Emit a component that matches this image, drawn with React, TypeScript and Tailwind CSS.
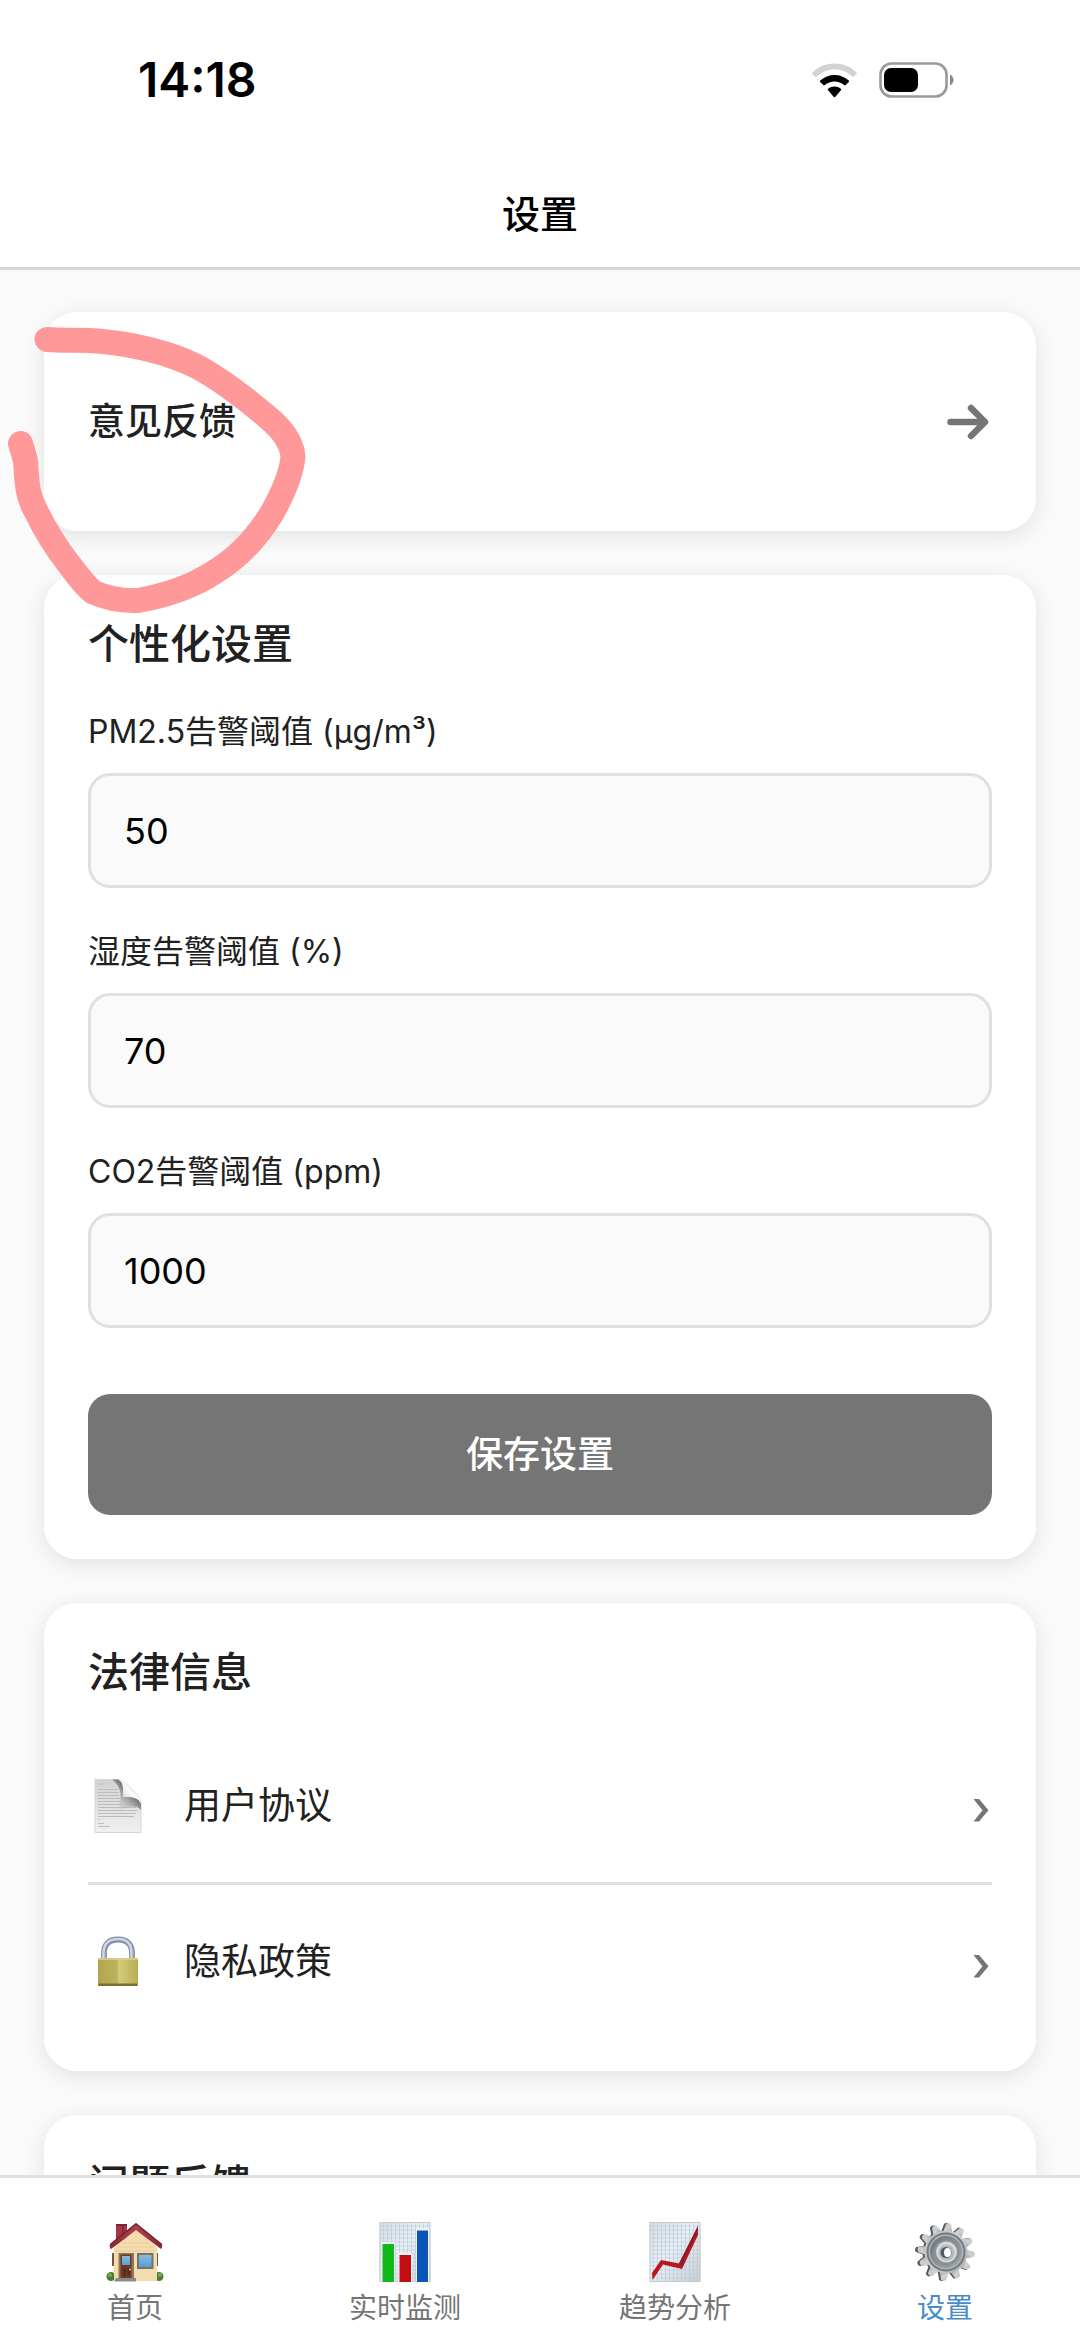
import React, { useState } from 'react';

const WifiIcon: React.FC = () => (
  <svg width="45" height="35" viewBox="0 0 45 35" aria-hidden="true">
    <path d="M0.5 9.5C6.5 3.6 14 0.5 22.5 0.5S38.5 3.6 44.5 9.5C45 10.1 45 10.6 44.5 11.1L42 13.6C41.4 14.1 40.9 14.1 40.3 13.6C35.3 8.9 29.2 6.4 22.5 6.4S9.7 8.9 4.7 13.6C4.1 14.1 3.6 14.1 3 13.6L0.5 11.1C0 10.6 0 10.1 0.5 9.5Z" fill="#d2d2d2" />
    <path d="M8.2 17.5C12.2 13.9 17.1 11.9 22.5 11.9S32.8 13.9 36.8 17.5C37.3 18 37.3 18.5 36.8 19L33.7 22.1C33.2 22.6 32.7 22.6 32.1 22.1C29.4 19.7 26.1 18.4 22.5 18.4S15.6 19.7 12.9 22.1C12.3 22.6 11.8 22.6 11.3 22.1L8.2 19C7.7 18.5 7.7 18 8.2 17.5Z" fill="#000" />
    <path d="M16.2 25.7C18 24.2 20.1 23.4 22.5 23.4S27 24.2 28.8 25.7C29.4 26.2 29.4 26.7 28.9 27.3L23.4 33.8C22.8 34.4 22.2 34.4 21.6 33.8L16.1 27.3C15.6 26.7 15.6 26.2 16.2 25.7Z" fill="#000" />
  </svg>
);

const BatteryIcon: React.FC = () => (
  <svg width="75" height="36" viewBox="0 0 75 36" aria-hidden="true">
    <rect x="1.5" y="1.5" width="66" height="33" rx="11" fill="none" stroke="#9a9a9a" strokeWidth="2.6" />
    <rect x="5" y="6" width="34" height="24" rx="7" fill="#000" />
    <path d="M71 12.5C73.2 13.6 74.5 15.6 74.5 18S73.2 22.4 71 23.5Z" fill="#8a8a8a" />
  </svg>
);

const ArrowIcon: React.FC = () => (
  <svg width="45" height="36" viewBox="0 0 45 36" fill="none" stroke="#757575" strokeWidth="6.5" strokeLinecap="round" strokeLinejoin="round" aria-hidden="true">
    <path d="M3.5 18H37M24 4L38 18L24 32" />
  </svg>
);

const ChevronIcon: React.FC = () => (
  <svg width="19" height="33" viewBox="0 0 19 33" aria-hidden="true">
    <path d="M0.5 10H6L15.5 21.3L6 32.5H0.5L9.5 21.3Z" fill="#757575" />
  </svg>
);

const DocumentIcon: React.FC = () => (
  <svg width="48" height="54" viewBox="0 0 48 54" aria-hidden="true">
    <defs>
      <linearGradient id="paper" x1="0" y1="0" x2="0" y2="1">
        <stop offset="0" stopColor="#d2d2d2" />
        <stop offset="1" stopColor="#f0f0f0" />
      </linearGradient>
      <linearGradient id="foldShade" x1="0" y1="1" x2="1" y2="0">
        <stop offset="0" stopColor="#d8d8d8" stopOpacity="0" />
        <stop offset="0.6" stopColor="#777" />
        <stop offset="1" stopColor="#555" />
      </linearGradient>
      <linearGradient id="fold" x1="0" y1="1" x2="1" y2="0">
        <stop offset="0" stopColor="#c4c4c4" />
        <stop offset="0.5" stopColor="#fafafa" />
        <stop offset="1" stopColor="#ddd" />
      </linearGradient>
    </defs>
    <path d="M1 0.5H24C29 1 33 5 37 9.5C42 14 47 18 47 26V53.5H1Z" fill="url(#paper)" stroke="#d6d6d6" />
    <path d="M4 5H11M4 10.5H24M4 13.5H25M4 16.5H25M4 19.5H26M4 22.5H26M4 25.5H27M4 28.5H42M4 31.5H43M4 34.5H42M4 37.5H40M4 40.5H6M4 44.5H10M4 47.5H16" stroke="#bcbcbc" strokeWidth="1" />
    <path d="M18 0.5H24C29 2 29.5 8 29 18C38 17.5 45 19 47 25V31C42 26 35 27 24 31C28 18 28 8 18 0.5Z" fill="url(#foldShade)" />
    <path d="M24 0.5C30 3 29.5 10 29 18C38 17.5 45 18 47 25C47 18 42 14 37 9.5C33 5 29 1 24 0.5Z" fill="url(#fold)" />
  </svg>
);

const LockIcon: React.FC = () => (
  <svg width="48" height="54" viewBox="0 0 48 54" aria-hidden="true">
    <defs>
      <linearGradient id="brass" x1="0" y1="0" x2="1" y2="0">
        <stop offset="0" stopColor="#b3a54e" />
        <stop offset="0.48" stopColor="#bdb25c" />
        <stop offset="0.52" stopColor="#d3cc7c" />
        <stop offset="1" stopColor="#b9ad55" />
      </linearGradient>
      <linearGradient id="shackle" x1="0" y1="0" x2="0" y2="1">
        <stop offset="0" stopColor="#7f8fae" />
        <stop offset="1" stopColor="#9c9ea4" />
      </linearGradient>
    </defs>
    <path d="M10 25V18C10 9 15.5 4.500 24 4.500S38 9 38 18V25" fill="none" stroke="url(#shackle)" strokeWidth="6" />
    <path d="M9.5 25V18C9.5 8.5 15.5 4 24 4S37.5 8.5 37.5 18V25" fill="none" stroke="#cfd6e6" strokeWidth="2.5" />
    <rect x="4" y="23" width="40" height="28" rx="1" fill="url(#brass)" />
    <path d="M4 24H44" stroke="#dcd58c" strokeWidth="1.5" />
    <path d="M4.5 49.7H43.5" stroke="#77702f" strokeWidth="2.5" />
  </svg>
);

const HomeIcon: React.FC = () => (
  <svg width="60" height="60" viewBox="0 0 60 60" aria-hidden="true">
    <defs>
      <linearGradient id="glass" x1="0" y1="0" x2="0" y2="1">
        <stop offset="0" stopColor="#8fbbdc" />
        <stop offset="1" stopColor="#4f9fd8" />
      </linearGradient>
      <linearGradient id="roof" x1="0" y1="0" x2="0" y2="1">
        <stop offset="0" stopColor="#b34452" />
        <stop offset="1" stopColor="#8c2433" />
      </linearGradient>
    </defs>
    <circle cx="6" cy="54.5" r="4.5" fill="#4d7d31" />
    <circle cx="54" cy="54.5" r="4.5" fill="#4d7d31" />
    <circle cx="5" cy="53" r="2" fill="#7aa955" />
    <circle cx="55" cy="53" r="2" fill="#7aa955" />
    <path d="M8 31V44M52 31V44" stroke="#7a5340" strokeWidth="2" />
    <path d="M9 24L31 6L52 25V59H9Z" fill="#f3dcae" />
    <path d="M17 21H45M13 25H49M11 29H51" stroke="#e3c994" strokeWidth="0.7" />
    <path d="M11 2H22V15L11 23Z" fill="#a63646" />
    <path d="M11 2H22V4H11Z" fill="#7f2230" />
    <path d="M18 4V17" stroke="#822737" strokeWidth="2" />
    <path d="M31 1L57 22C57.5 24 57 26 56 27L31 8L6 27C4.5 26 4.5 24 5 22Z" fill="url(#roof)" />
    <path d="M31 1L57 22L56.5 23L31 2.5L5.5 23L5 22Z" fill="#5e2229" />
    <path d="M13.5 31H29V57H13.5Z" fill="#8f7560" />
    <path d="M15.5 32.5H26.5V57H15.5Z" fill="#713824" />
    <rect x="17" y="34" width="8" height="9" fill="url(#glass)" />
    <path d="M18 46H21V54H18ZM22.5 46H25V54H22.5Z" fill="#5c2a1b" />
    <circle cx="25" cy="47.5" r="1" fill="#f0d070" />
    <path d="M11 56H31V59.5H9Z" fill="#8c8c88" />
    <rect x="32" y="31" width="16.5" height="16" fill="#77716a" />
    <rect x="34" y="33" width="12.5" height="12" fill="url(#glass)" />
  </svg>
);

const GRID = [4, 8, 12, 16, 20, 24, 28, 32, 36, 40, 44, 48];

const ChartPaper: React.FC<{ id: string }> = ({ id }) => (
  <>
    <defs>
      <linearGradient id={id} x1="0" y1="0" x2="1" y2="1">
        <stop offset="0" stopColor="#d8dee2" />
        <stop offset="0.45" stopColor="#eaf1f7" />
        <stop offset="1" stopColor="#c9ccd4" />
      </linearGradient>
    </defs>
    <rect x="4.5" y="0" width="51" height="60" fill={`url(#${id})`} />
    {GRID.map((n) => (
      <path key={n} d={`M${4.5 + n} 0V60M4.5 ${n}H55.5`} stroke="#bccbd9" strokeWidth="0.7" />
    ))}
    <path d="M4.5 52H55.5M4.5 56H55.5" stroke="#bccbd9" strokeWidth="0.7" />
    <rect x="5" y="0.5" width="50" height="59" fill="none" stroke="#c4cad0" strokeWidth="1" />
  </>
);

const BarsIcon: React.FC = () => (
  <svg width="60" height="60" viewBox="0 0 60 60" aria-hidden="true">
    <ChartPaper id="barsPaper" />
    <path d="M6.5 20H20V60H6.5ZM23.5 31H37V60H23.5ZM41 6.5H54V60H41Z" fill="#eef3f7" />
    <rect x="7.5" y="22" width="11.5" height="38" fill="#10b81a" />
    <rect x="24.5" y="33" width="11.5" height="27" fill="#c20d12" />
    <rect x="42" y="8.5" width="11" height="51.5" fill="#0a55b8" />
  </svg>
);

const TrendIcon: React.FC = () => (
  <svg width="60" height="60" viewBox="0 0 60 60" aria-hidden="true">
    <ChartPaper id="trendPaper" />
    <path d="M7 51L16 38L34 41.5L53 4V13L37 47L18 42.5L7.5 58Z" fill="#b8151d" />
    <path d="M34 41.5L53 4V8L36 44Z" fill="#8d1d27" />
  </svg>
);

const TEETH = [5, 35, 65, 95, 125, 155, 185, 215, 245, 275, 305, 335];

const GearIcon: React.FC = () => (
  <svg width="60" height="60" viewBox="0 0 60 60" aria-hidden="true">
    <defs>
      <linearGradient id="steel" x1="0" y1="0" x2="1" y2="1">
        <stop offset="0" stopColor="#b9bcbe" />
        <stop offset="0.5" stopColor="#cfd1d2" />
        <stop offset="1" stopColor="#a5a8aa" />
      </linearGradient>
      <linearGradient id="dish" x1="0" y1="0" x2="1" y2="1">
        <stop offset="0" stopColor="#6d7377" />
        <stop offset="1" stopColor="#a4abae" />
      </linearGradient>
    </defs>
    <g fill="#55585a">
      {TEETH.map((deg) => (
        <path key={deg} d="M24.5 10L26.5 2Q29 0 31.5 2L33.5 10Z" transform={`rotate(${deg} 29 30)`} />
      ))}
      <circle cx="29" cy="30" r="21.5" />
    </g>
    <g fill="url(#steel)">
      {TEETH.map((deg) => (
        <path key={deg} d="M26.5 10L28.5 2Q31 0.5 33.5 2L35.5 10Z" transform={`rotate(${deg} 31 30)`} />
      ))}
      <circle cx="31" cy="30" r="21.5" />
    </g>
    <circle cx="31" cy="30" r="19.5" fill="#747a7e" />
    <circle cx="31" cy="30" r="17.5" fill="#aeb4b7" />
    <circle cx="31" cy="30" r="16" fill="url(#dish)" />
    <circle cx="31.5" cy="30.5" r="13" fill="#8a9195" />
    <circle cx="31.5" cy="30" r="10.5" fill="#d5d9dc" />
    <circle cx="31.5" cy="30.5" r="8" fill="#b4babf" />
    <circle cx="31" cy="30.5" r="5.5" fill="#555b60" />
    <ellipse cx="32.5" cy="30.5" rx="3.5" ry="4.5" fill="#fff" />
  </svg>
);

const Card: React.FC<{ className?: string; children: React.ReactNode }> = ({ className = 'p-11', children }) => (
  <section className={`${className} shrink-0 rounded-[33px] bg-white shadow-[0_5px_22px_rgba(0,0,0,0.1)]`}>{children}</section>
);

const CardTitle: React.FC<{ children: React.ReactNode }> = ({ children }) => (
  <h2 className="mb-[31px] text-[41px] leading-[51px] font-medium">{children}</h2>
);

const fields = [
  { id: 'pm25', label: 'PM2.5告警阈值 (µg/m³)', value: '50' },
  { id: 'humidity', label: '湿度告警阈值 (%)', value: '70' },
  { id: 'co2', label: 'CO2告警阈值 (ppm)', value: '1000' },
];

const legalLinks = [
  { label: '用户协议', icon: <DocumentIcon /> },
  { label: '隐私政策', icon: <LockIcon /> },
];

const tabs = [
  { label: '首页', icon: <HomeIcon /> },
  { label: '实时监测', icon: <BarsIcon /> },
  { label: '趋势分析', icon: <TrendIcon /> },
  { label: '设置', icon: <GearIcon />, active: true },
];

const App: React.FC = () => {
  const [values, setValues] = useState<Record<string, string>>(
    Object.fromEntries(fields.map((f) => [f.id, f.value]))
  );

  return (
    <div lang="zh-CN" className="relative flex h-screen flex-col overflow-hidden bg-[#fafafa] font-['Inter','Noto_Sans_CJK_SC',sans-serif] text-[#212121]">
      <header className="shrink-0 border-b-[3px] border-[#d6d6d6] bg-white text-black">
        <div className="flex h-40 items-center justify-between pr-[126px] pl-[138px]">
          <time className="text-[48px] font-semibold">14:18</time>
          <div className="flex items-center gap-[22px]">
            <WifiIcon />
            <BatteryIcon />
          </div>
        </div>
        <h1 className="h-[107px] text-center text-[38px] leading-[109px] font-medium">设置</h1>
      </header>

      <main className="flex min-h-0 flex-1 flex-col gap-11 overflow-y-auto px-11 pt-[42px] [scrollbar-width:none]">
        <Card className="">
          <a href="#feedback" className="flex h-[219px] items-center justify-between px-11">
            <span className="text-[37px] font-medium">意见反馈</span>
            <ArrowIcon />
          </a>
        </Card>

        <Card>
          <CardTitle>个性化设置</CardTitle>
          <form onSubmit={(e) => e.preventDefault()}>
            <div className="flex flex-col gap-[33px]">
              {fields.map((f) => (
                <div key={f.id}>
                  <label htmlFor={f.id} className="mb-[10px] block text-[32px] leading-[62px]">{f.label}</label>
                  <input
                    id={f.id}
                    type="text"
                    inputMode="numeric"
                    value={values[f.id]}
                    onChange={(e) => setValues({ ...values, [f.id]: e.target.value })}
                    className="block h-[115px] w-full rounded-[22px] border-[3px] border-[#e0e0e0] bg-[#fafafa] px-[33px] text-[36px] text-black"
                  />
                </div>
              ))}
            </div>
            <button type="submit" className="mt-[66px] block h-[121px] w-full rounded-[22px] bg-[#757575] text-[37px] font-medium text-white">
              保存设置
            </button>
          </form>
        </Card>

        <Card className="px-11 pt-11 pb-[33px]">
          <CardTitle>法律信息</CardTitle>
          <ul className="divide-y-[3px] divide-[#e0e0e0]">
            {legalLinks.map((link) => (
              <li key={link.label}>
                <a href="#legal" className="flex h-[153px] items-center">
                  <span className="flex w-[96px] pl-[6px]">{link.icon}</span>
                  <span className="flex-1 text-[37px]">{link.label}</span>
                  <ChevronIcon />
                </a>
              </li>
            ))}
          </ul>
        </Card>

        <Card>
          <CardTitle>问题反馈</CardTitle>
        </Card>
      </main>

      <nav className="grid shrink-0 grid-cols-4 border-t-[3px] border-[#e0e0e0] bg-white">
        {tabs.map((tab) => (
          <a
            key={tab.label}
            href="#tab"
            className={`flex flex-col items-center gap-2 pt-11 pb-[15px] text-[28px] leading-[36px] ${tab.active ? 'text-[#4a8bcb]' : 'text-[#757575]'}`}
          >
            {tab.icon}
            {tab.label}
          </a>
        ))}
      </nav>

      {/* hand-drawn marker around the feedback entry */}
      <svg className="pointer-events-none absolute top-[300px] left-0" width="330" height="330" viewBox="0 300 330 330" fill="none" aria-hidden="true">
        <path
          d="M47 339.5C66 341 84 339 103 341.5C136 345 167 352 196 366C224 381 250 402 272 421C283 431 292 442 293 457C291 476 281 497 272 513C255 541 235 560 213 573C190 588 163 596 138 600.5C122 601 106 598 93 592C83 584 76 573 68 563C55 546 44 528 36 511C26 494 27 478 25.5 461Q23 451 20.5 443.5"
          stroke="#ff9999"
          strokeWidth="25"
          strokeLinecap="round"
          strokeLinejoin="round"
        />
      </svg>
    </div>
  );
};

export default App;
